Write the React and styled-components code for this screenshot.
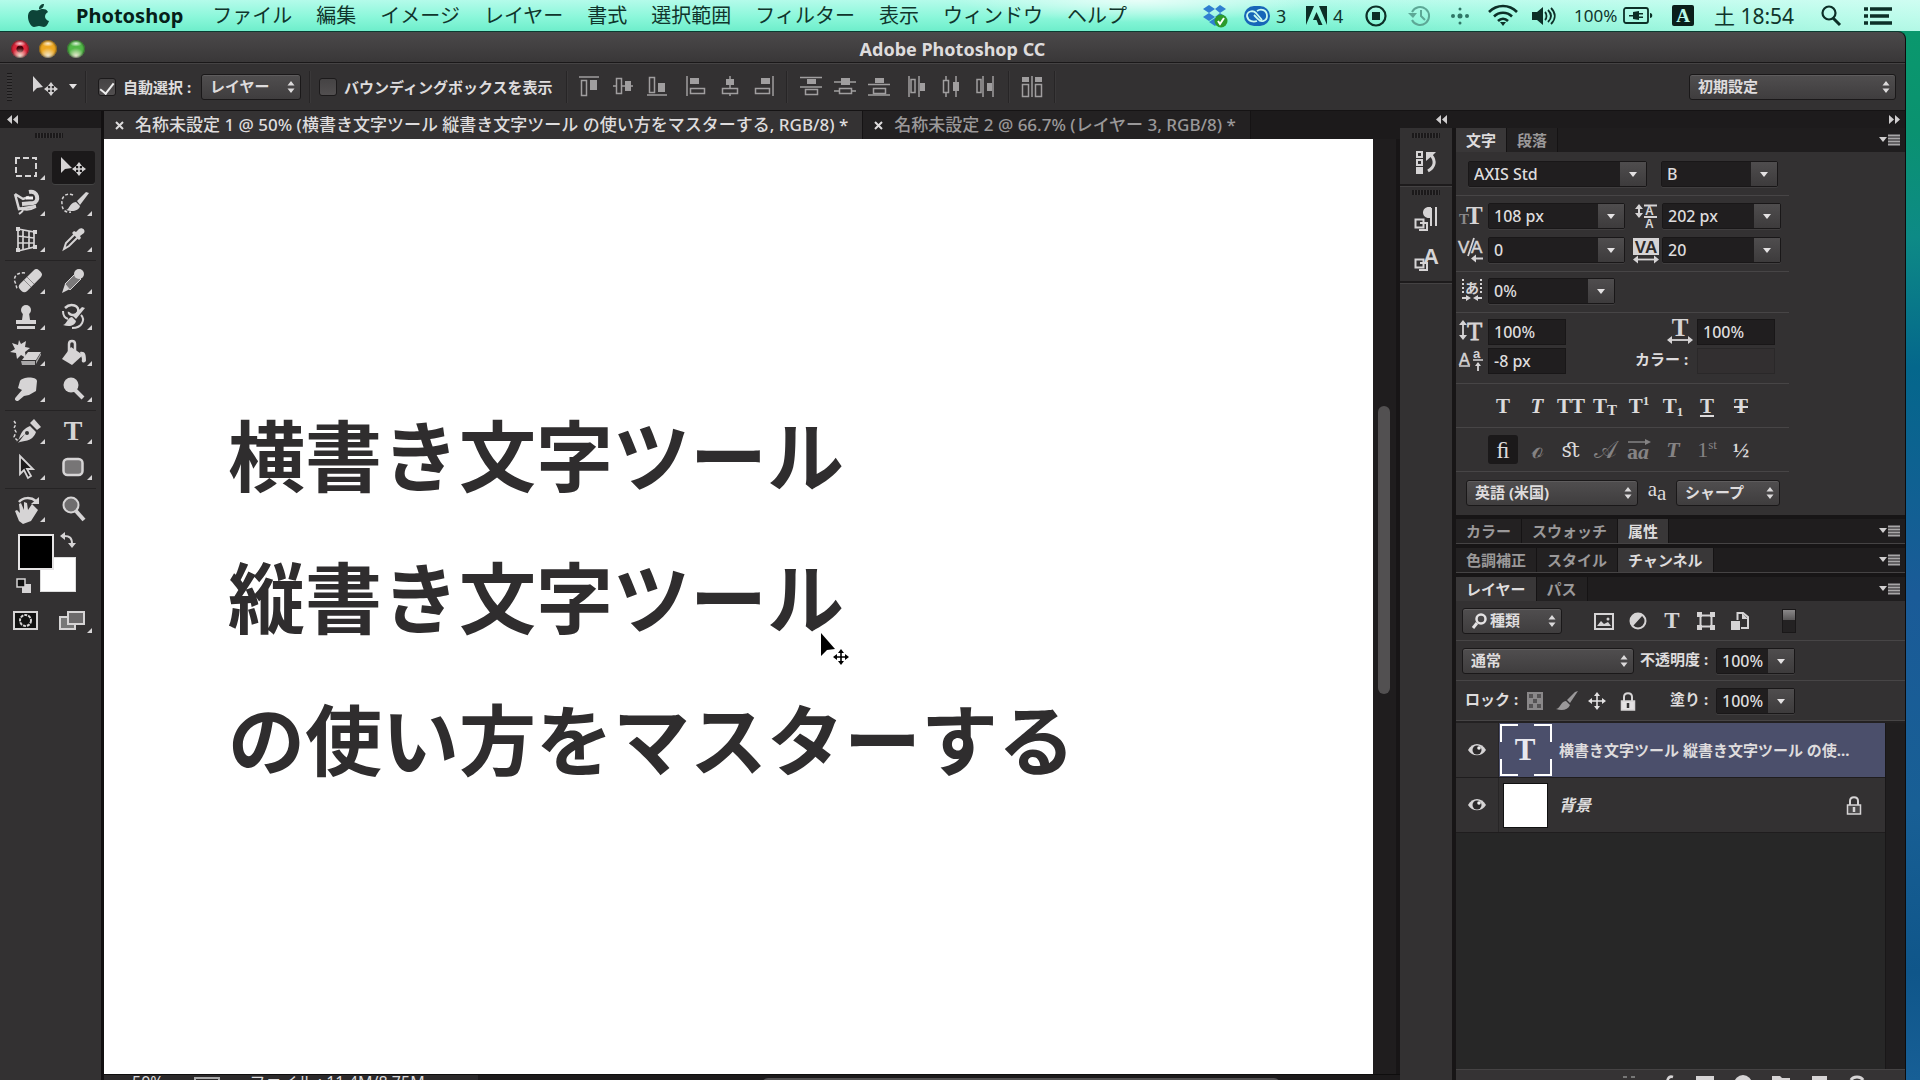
import React from "react";
import styled, { createGlobalStyle, css } from "styled-components";

const color = {
  panel: "#333132",
  strip: "#1f1d1e",
  edge: "#171516",
  field: "#201e1f",
  line: "#4a4849",
  text: "#dedcdd",
  dim: "#9a9899",
  icon: "#d6d4d5",
};

const Global = createGlobalStyle`
  * { box-sizing: border-box; }
  body {
    margin: 0;
    overflow: hidden;
    background: #0b5c8f;
    font-family: "Noto Sans", "Noto Sans CJK JP", sans-serif;
    font-size: 16px;
    line-height: 24px;
    color: ${color.text};
  }
  button, select, input {
    font: inherit;
    color: inherit;
    margin: 0;
    padding: 0;
    border: 0;
    background: none;
    outline: none;
  }
  ul { list-style: none; margin: 0; padding: 0; }
  svg { display: block; flex: none; overflow: visible; }
`;

const Desktop = styled.div`
  height: 100vh;
  display: flex;
  flex-direction: column;
  background: linear-gradient(#0a9a6c 0, #0a9270 12%, #0d8a86 22%, #04678c 34%, #1a5b98 55%, #185f95 75%, #0f568a 90%, #175f96 100%);
`;

/* ---------- menu bar ---------- */

const MenuBar = styled.header`
  flex: none;
  height: 31px;
  display: flex;
  align-items: center;
  padding: 0 26px 0 28px;
  color: #10352c;
  font-size: 20px;
  line-height: 30px;
  background:
    radial-gradient(ellipse 180px 22px at 1140px 0, rgba(255, 255, 255, 0.7), transparent),
    linear-gradient(90deg, transparent 65%, rgba(225, 255, 247, 0.6)),
    linear-gradient(#b4fbea, #8bf7da 55%, #6eeecb);
`;
const Menus = styled.nav`
  display: flex;
  gap: 24px;
  margin-left: 27px;
`;
const MenuItem = styled.button`
  white-space: nowrap;
  font-weight: ${(p) => (p.$strong ? 700 : 400)};
  color: ${(p) => (p.$strong ? "#062019" : "inherit")};
  padding-right: ${(p) => (p.$strong ? 5 : 0)}px;
`;
const Status = styled.div`
  display: flex;
  align-items: center;
  gap: 16px;
  margin-left: auto;
`;
const StatusItem = styled.button`
  width: ${(p) => p.$w}px;
  height: 30px;
  display: flex;
  align-items: center;
  gap: 6px;
  font-size: ${(p) => p.$size || 18}px;
  white-space: nowrap;
`;

/* ---------- window ---------- */

const Window = styled.main`
  flex: 1;
  min-height: 0;
  display: flex;
  flex-direction: column;
  margin-right: 14px;
  border-top: 1px solid #0a3b30;
  border-right: 1px solid #0d0c0d;
  border-radius: 0 8px 0 0;
  background: ${color.edge};
  overflow: hidden;
`;
const TitleBar = styled.div`
  flex: none;
  height: 31px;
  display: grid;
  grid-template-columns: 1fr auto 1fr;
  align-items: center;
  padding: 4px 11px 0;
  background: linear-gradient(#4b494a, #393738);
  border-bottom: 1px solid #1a1819;
`;
const Lights = styled.div`
  display: flex;
  gap: 10px;
`;
const Light = styled.button`
  width: 18px;
  height: 18px;
  border-radius: 50%;
  background:
    radial-gradient(ellipse 6px 3px at 50% 20%, rgba(255, 255, 255, 0.8), transparent),
    radial-gradient(circle at 50% 90%, #f4eedb, transparent 45%),
    ${(p) => p.$dot ? "radial-gradient(circle, #4a0008 0 3px, transparent 4px)," : ""}
    ${(p) => p.$c};
  box-shadow: inset 0 0 2px 1px rgba(0, 0, 0, 0.5);
`;
const Title = styled.h1`
  margin: 0;
  font-size: 18px;
  line-height: 24px;
  font-weight: 700;
`;

const OptionsBar = styled.div`
  flex: none;
  height: 48px;
  display: flex;
  align-items: center;
  padding: 0 9px 1px 0;
  background: ${color.panel};
  border-top: 1px solid #454344;
  border-bottom: 1px solid #151314;
`;
const OptGroup = styled.div`
  width: ${(p) => p.$w}px;
  height: 32px;
  padding-left: ${(p) => p.$pl}px;
  display: flex;
  align-items: center;
  gap: ${(p) => p.$gap || 0}px;
  border-right: 1px solid #272526;
  box-shadow: 1px 0 #3a3839;
  white-space: nowrap;
`;
const Grip = styled.div`
  background: ${(p) =>
    p.$v
      ? "repeating-linear-gradient(#1b191a 0 1px, #3a3839 1px 3px)"
      : "repeating-linear-gradient(90deg, #1b191a 0 2px, #3a3839 2px 3px)"};
  width: ${(p) => (p.$v ? 5 : 28)}px;
  height: ${(p) => (p.$v ? 28 : 5)}px;
`;
const CheckLabel = styled.label`
  display: flex;
  align-items: center;
  gap: 7px;
  font-weight: 700;
  font-size: 15px;
`;
const CheckBox = styled.input`
  appearance: none;
  width: 18px;
  height: 18px;
  border-radius: 3px;
  border: 1px solid #1c1a1b;
  background: linear-gradient(#454344, #524f50);
  display: grid;
  place-items: center;
  &:checked::before {
    content: "";
    width: 6px;
    height: 12px;
    border: solid #eee;
    border-width: 0 2px 2px 0;
    transform: rotate(38deg);
  }
`;
const AlignButton = styled.button`
  width: 34px;
  height: 26px;
  display: grid;
  place-items: center;
`;
const AlignSet = styled.div`
  display: flex;
`;
const PushSelect = styled.div`
  margin-left: auto;
  ${OptGroup} & { padding-right: 8px; }
`;

const SelectWrap = styled.div`
  display: grid;
  align-items: center;
  flex: none;
  width: ${(p) => p.$w}px;
  > * { grid-area: 1 / 1; }
  > svg { justify-self: end; margin-right: 6px; pointer-events: none; }
`;
const SelectBox = styled.select`
  appearance: none;
  width: 100%;
  height: 26px;
  padding: 0 18px 3px ${(p) => p.$pl || 8}px;
  font-weight: 700;
  font-size: 15px;
  line-height: 22px;
  border: 1px solid #1a1819;
  border-radius: 3px;
  background: linear-gradient(#504e4f, #3f3d3e);
  box-shadow: inset 0 1px #5e5c5d;
  option { color: #222; }
`;
const FilterGlyph = styled.span`
  padding-left: 10px;
  pointer-events: none;
`;

/* ---------- work area ---------- */

const Work = styled.div`
  flex: 1;
  min-height: 0;
  display: flex;
`;
const ToolColumn = styled.aside`
  flex: none;
  width: 104px;
  display: flex;
  flex-direction: column;
  background: ${color.panel};
  border-right: 3px solid #121011;
`;
const CollapseBar = styled.div`
  flex: none;
  height: 17px;
  display: flex;
  align-items: center;
  justify-content: space-between;
  padding: ${(p) => p.$p};
  background: #1d1b1c;
`;
const CollapseButton = styled.button`
  display: flex;
  height: 12px;
  align-items: center;
`;
const ToolGrip = styled.div`
  height: 23px;
  padding: 5px 0 0 35px;
`;
const ToolGroup = styled.div`
  display: grid;
  grid-template-columns: 43px 43px;
  gap: 3px 4px;
  margin: 0 5px;
  & + & {
    margin-top: 4px;
    padding-top: 4px;
    border-top: 1px solid #252324;
  }
`;
const ToolButton = styled.button`
  width: 43px;
  height: 33px;
  border-radius: 3px;
  ${(p) => p.$on && css`background: #1b191a; box-shadow: 0 1px #444;`}
`;
const Swatches = styled.div`
  display: grid;
  grid-template-columns: 2px 22px 14px 22px;
  grid-template-rows: 2px 23px 13px 22px 2px;
  margin: 6px 0 10px 16px;
`;
const Swatch = styled.button`
  grid-area: ${(p) => p.$area};
  background: ${(p) => p.$c};
  border: ${(p) => p.$b};
  z-index: ${(p) => p.$z};
`;
const SwatchAux = styled.button`
  grid-area: ${(p) => p.$area};
  align-self: ${(p) => p.$as};
  justify-self: ${(p) => p.$js};
  z-index: 2;
`;

const Doc = styled.section`
  flex: 1;
  min-width: 0;
  display: flex;
  flex-direction: column;
`;
const DocTabs = styled.div`
  flex: none;
  height: 28px;
  display: flex;
  background: #1c1a1b;
`;
const DocTab = styled.div`
  display: flex;
  align-items: center;
  gap: 11px;
  padding: 0 14px 0 10px;
  font-size: 17px;
  line-height: 24px;
  font-weight: 500;
  white-space: nowrap;
  color: ${(p) => (p.$on ? color.text : color.dim)};
  background: ${(p) => (p.$on ? "#343233" : "#232122")};
  border-right: 1px solid #151314;
`;
const TabName = styled.button`
  white-space: nowrap;
`;
const CloseTab = styled.button`
  width: 10px;
  display: grid;
  place-items: center;
  height: 20px;
  color: ${color.text};
`;
const CanvasRow = styled.div`
  flex: 1;
  min-height: 0;
  display: flex;
`;
const Canvas = styled.div`
  position: relative;
  flex: 1;
  padding: 243px 0 0 124px;
  background: #fff;
`;
const CanvasText = styled.p`
  margin: 0;
  color: #2f2d2e;
  font-family: "Noto Sans CJK JP", sans-serif;
  font-weight: 700;
  font-size: 77px;
  line-height: 142px;
  white-space: pre-line;
`;
const Cursor = styled.svg`
  position: absolute;
  left: 716px;
  top: 493px;
`;
const VTrack = styled.div`
  flex: none;
  width: 27px;
  display: grid;
  grid-template-rows: 267fr 287fr 380fr;
  padding-left: 5px;
  background: #1f1d1e;
  border-right: 4px solid ${color.edge};
`;
const VThumb = styled.div`
  grid-row: 2;
  width: 12px;
  border-radius: 6px;
  background: #525051;
`;
const StatusBar = styled.div`
  flex: none;
  height: 6px;
  display: flex;
  align-items: flex-start;
  background: #1c1a1b;
  border-top: 1px solid #0e0d0d;
  font-size: 16px;
  line-height: 14px;
  overflow: hidden;
`;
const StatusText = styled.div`
  width: 374px;
  display: flex;
  gap: 30px;
  padding: 0 0 0 28px;
  background: #2b292a;
  white-space: nowrap;
`;
const StatusIcon = styled.span`
  width: 26px;
  height: 14px;
  margin-top: 2px;
  border: 2px solid #aaa;
`;
const HTrack = styled.div`
  flex: 1;
  padding: 3px 120px 0 284px;
`;
const HThumb = styled.div`
  height: 12px;
  border-radius: 6px;
  background: #525051;
`;

/* ---------- dock ---------- */

const Dock = styled.aside`
  flex: none;
  width: 505px;
  display: flex;
  flex-direction: column;
`;
const DockBody = styled.div`
  flex: 1;
  min-height: 0;
  display: flex;
  gap: 4px;
`;
const IconRail = styled.div`
  width: 52px;
  background: ${color.panel};
`;
const RailGroup = styled.div`
  display: flex;
  flex-direction: column;
  align-items: center;
  padding: ${(p) => p.$p};
  border-bottom: 2px solid #1d1b1c;
  box-shadow: 0 1px #444243;
  ${Grip} { margin-bottom: 4px; }
`;
const RailButton = styled.button`
  width: 40px;
  height: 40px;
  display: grid;
  place-items: center;
`;
const Panels = styled.div`
  flex: 1;
  min-width: 0;
  display: flex;
  flex-direction: column;
  background: ${color.edge};
`;
const PanelTabs = styled.div`
  flex: none;
  height: 24px;
  display: flex;
  background: ${color.strip};
  ${(p) => p.$closed && css`height: 25px; border-bottom: 1px solid #454344;`}
  ${(p) => p.$gap && css`margin-top: 4px;`}
`;
const PanelTab = styled.button`
  padding: 0 10px 1px;
  font-weight: 700;
  font-size: 15px;
  line-height: 22px;
  white-space: nowrap;
  color: ${(p) => (p.$on ? color.text : color.dim)};
  background: ${(p) => (p.$on ? "#393738" : "#232122")};
  border-right: 1px solid #151314;
`;
const PanelMenu = styled.button`
  margin: 0 5px 0 auto;
  width: 21px;
  display: grid;
  place-items: center;
`;
const PanelBody = styled.div`
  flex: none;
  background: ${color.panel};
`;
const Section = styled.div`
  max-width: 333px;
  padding: ${(p) => p.$pt || 7}px 0 ${(p) => p.$pb || 8}px;
  border-bottom: 1px solid ${(p) => (p.$last ? "transparent" : "#474546")};
  display: grid;
  row-gap: ${(p) => p.$gap || 8}px;
`;
const FieldRow = styled.div`
  display: grid;
  grid-template-columns: ${(p) => p.$cols};
  align-items: center;
  height: 26px;
`;
const Combo = styled.div`
  display: flex;
  height: 26px;
  width: ${(p) => p.$w}px;
  border: 1px solid #191718;
  box-shadow: 0 1px #403e3f;
  border-radius: 2px;
`;
const Field = styled.input`
  flex: ${(p) => (p.$solo ? "none" : 1)};
  min-width: 0;
  width: ${(p) => (p.$solo ? 78 : 40)}px;
  height: ${(p) => (p.$solo ? 26 : 24)}px;
  padding-left: 5px;
  font-weight: 500;
  background: ${(p) => (p.$blank ? "#322f30" : color.field)};
  ${(p) => p.$solo && css`border: 1px solid ${p.$blank ? "#2a2829" : "#191718"};`}
`;
const Drop = styled.button`
  width: 26px;
  display: grid;
  place-items: center;
  background: linear-gradient(#4f4d4e, #3d3b3c);
`;
const FieldIcon = styled.label`
  display: block;
  padding-left: ${(p) => p.$pl || 3}px;
`;
const RowLabel = styled.label`
  font-weight: 700;
  font-size: 15px;
  white-space: nowrap;
  line-height: 22px;
  padding-bottom: 4px;
`;
const StyleRow = styled.div`
  height: 44px;
  max-width: 333px;
  display: flex;
  align-items: center;
  gap: 4px;
  padding-left: 32px;
  border-bottom: 1px solid #474546;
`;
const StyleButton = styled.button`
  width: 30px;
  height: 29px;
  display: flex;
  align-items: center;
  justify-content: center;
  font-family: "Liberation Serif", "DejaVu Serif", serif;
  font-size: ${(p) => p.$size || 21}px;
  line-height: 26px;
  white-space: nowrap;
  font-weight: ${(p) => (p.$light ? 400 : 700)};
  font-style: ${(p) => (p.$italic ? "italic" : "normal")};
  text-decoration: ${(p) => p.$deco || "none"};
  color: ${(p) => (p.$off ? "#858384" : "#dcdadb")};
  ${(p) => p.$on && css`background: #1b191a; border-radius: 3px;`}
  small { font-size: 15px; line-height: 20px; align-self: flex-end; }
  sup, sub { font-size: 13px; line-height: 10px; }
  sup { align-self: flex-start; margin-top: 5px; }
  sub { align-self: flex-end; margin-bottom: 3px; }
`;
const FieldHalf = styled.div`
  display: flex;
  width: 78px;
`;
const AntiAlias = styled.label`
  display: flex;
  justify-content: center;
  font-family: "Liberation Serif", serif;
  font-size: 21px;
  line-height: 20px;
  padding-bottom: 4px;
`;
const AntiAliasLow = styled.span`
  padding-top: 4px;
`;
const LayerBar = styled.div`
  height: 40px;
  padding: 7px 0 6px 6px;
  display: flex;
  align-items: center;
  border-bottom: 1px solid #474546;
`;
const LayerIcons = styled.div`
  display: flex;
  gap: ${(p) => p.$gap}px;
  margin-left: ${(p) => p.$ml}px;
  button { width: 20px; height: 24px; display: grid; place-items: center; }
`;
const FilterSwitch = styled.button`
  width: 14px;
  height: 24px;
  margin-left: 32px;
  border: 1px solid #1a1819;
  background: linear-gradient(#8a8889, #5a5859 45%, #242223 46%);
`;
const LayerLabel = styled(RowLabel)`
  width: ${(p) => p.$w}px;
  margin-left: ${(p) => p.$ml || 0}px;
`;
const LayerArea = styled.div`
  flex: 1;
  min-height: 0;
  display: flex;
  background: #272727;
  border-top: 2px solid #232122;
`;
const LayerList = styled.ul`
  flex: 1;
  min-width: 0;
`;
const LayerScroll = styled.div`
  width: 20px;
  background: #201e1f;
  border-left: 1px solid #191718;
`;
const LayerItem = styled.li`
  height: 55px;
  display: flex;
  align-items: center;
  border-bottom: 1px solid #1f1d1e;
  background: ${(p) => (p.$on ? "#4b4f6b" : "#333132")};
`;
const EyeButton = styled.button`
  flex: none;
  width: 43px;
  height: 54px;
  display: grid;
  place-items: center;
  background: #333132;
  border-right: 1px solid #272526;
`;
const Thumb = styled.div`
  flex: none;
  width: 53px;
  height: 54px;
  display: grid;
  place-items: center;
`;
const WhiteThumb = styled.div`
  width: 45px;
  height: 45px;
  background: #fff;
  border: 1px solid #111;
`;
const LayerName = styled.span`
  flex: 1;
  padding: 0 0 1px 7px;
  font-size: ${(p) => (p.$italic ? 16 : 15)}px;
  font-weight: 700;
  font-style: ${(p) => (p.$italic ? "italic" : "normal")};
  white-space: nowrap;
`;
const LayerLock = styled.span`
  margin-right: 23px;
`;
const LayerFooter = styled.div`
  flex: none;
  height: 11px;
  display: flex;
  justify-content: flex-end;
  gap: 18px;
  padding: 5px 38px 0 0;
  background: #353334;
  border-top: 1px solid #454344;
  overflow: hidden;
  button { width: 20px; height: 18px; flex: none; }
`;

/* ---------- drawings ---------- */

const Ico = ({ w, h, children, ...rest }) => (
  <svg width={w} height={h} viewBox={`0 0 ${w} ${h}`} fill="none" aria-hidden="true" {...rest}>
    {children}
  </svg>
);
const I = color.icon;

const UpDown = () => (
  <Ico w={8} h={14}><path d="M0.5 5.5 4 1l3.5 4.5zM0.5 8.5 4 13l3.5-4.5z" fill="#dcdadb" /></Ico>
);
const Down = () => <Ico w={8} h={5}><path d="M0 0h8L4 5z" fill="#e4e2e3" /></Ico>;
const Chev = ({ right }) => (
  <Ico w={12} h={9}>
    <path d={right ? "M1 0l5 4.5L1 9zM7 0l5 4.5L7 9z" : "M5 0v9L0 4.5zM11 0v9L6 4.5z"} fill="#cfcdce" />
  </Ico>
);
const FlyMenu = () => (
  <Ico w={21} h={13}>
    <path d="M0 3h8L4 8z" fill="#d0cecf" />
    <path d="M9 1.5h12M9 4.5h12M9 7.5h12M9 10.5h12" stroke="#a8a6a7" strokeWidth="2" />
  </Ico>
);
const Close = () => <Ico w={9} h={9}><path d="M1 1l7 7M8 1L1 8" stroke="currentColor" strokeWidth="2" /></Ico>;

const FourWay = ({ x, y, r = 6, fill = I }) => (
  <g fill={fill} stroke={fill}>
    <path d={`M${x - r + 1} ${y}H${x + r - 1}M${x} ${y - r + 1}V${y + r - 1}`} strokeWidth="1.6" />
    <path
      stroke="none"
      d={`M${x} ${y - r - 1}l3 4h-6zM${x} ${y + r + 1}l3-4h-6zM${x - r - 1} ${y}l4-3v6zM${x + r + 1} ${y}l-4-3v6z`}
    />
  </g>
);
const MoveIcon = () => (
  <Ico w={27} h={22}>
    <path d="M1 0v16l4-4 6-1z" fill={I} />
    <FourWay x={19} y={13} />
  </Ico>
);

const alignPaths = {
  top: <><path d="M0 1h20" /><path d="M2.5 4.5h5v15h-5z" /><path d="M11 4h7v10h-7z" fill="#a09e9f" stroke="none" /></>,
  vmid: <><path d="M0 10h20" /><path d="M3.5 2.5h5v15h-5z" fill="#333132" /><path d="M12 5h6v10h-6z" fill="#a09e9f" stroke="none" /></>,
  bottom: <><path d="M0 19h20" /><path d="M2.5 1.5h5v15h-5z" /><path d="M11 7h7v9h-7z" fill="#a09e9f" stroke="none" /></>,
  left: <><path d="M1 0v20" /><path d="M4 2h9v6h-9z" fill="#a09e9f" stroke="none" /><path d="M4.5 12.5h14v5h-14z" /></>,
  hmid: <><path d="M10 0v20" /><path d="M6 3h8v6H6z" fill="#a09e9f" stroke="none" /><path d="M2.5 12.5h15v5h-15z" fill="#333132" /></>,
  right: <><path d="M19 0v20" /><path d="M7 2h9v6H7z" fill="#a09e9f" stroke="none" /><path d="M1.5 12.5h14v5h-14z" /></>,
  dtop: <><path d="M0 1.5h22M0 11h22" /><path d="M7 3h9v5H7z" fill="#a09e9f" stroke="none" /><path d="M5.5 13.5h12v5h-12z" /></>,
  dmid: <><path d="M0 6h22M0 15h22" /><path d="M7 2h9v7H7z" fill="#a09e9f" stroke="none" /><path d="M5.5 12.5h12v5h-12z" fill="#333132" /></>,
  dbottom: <><path d="M0 8.5h22M0 19h22" /><path d="M7 2h9v5H7z" fill="#a09e9f" stroke="none" /><path d="M5.5 12.5h12v5h-12z" /></>,
  dleft: <><path d="M2 0v21M12 0v21" /><path d="M4 3.5h4v13H4z" /><path d="M13 7h5v8h-5z" fill="#a09e9f" stroke="none" /></>,
  dcenter: <><path d="M5 0v21M15 0v21" /><path d="M2.5 4.5h5v12h-5z" fill="#333132" /><path d="M12 6h6v9h-6z" fill="#a09e9f" stroke="none" /></>,
  dright: <><path d="M8 0v21M18 0v21" /><path d="M2 3.5h4v13H2z" /><path d="M12 7h5v8h-5z" fill="#a09e9f" stroke="none" /></>,
  auto: <><path d="M11 0v21M1.5 8.5h6v12h-6zM14.5 8.5h6v12h-6z" /><path d="M1 1h7v5H1zM14 1h7v5h-7z" fill="#a09e9f" stroke="none" /></>,
};
const AlignIcon = ({ k }) => (
  <Ico w={22} h={21}><g stroke="#a09e9f" strokeWidth="1.5">{alignPaths[k]}</g></Ico>
);

const brush = (
  <>
    <path d="M37 6l-3-1-9 9 3 4z" fill={I} />
    <path d="M24 15l4 4c-1 5-8 6-14 4 4-1 3-7 10-8z" fill={I} />
  </>
);
const toolDrawings = {
  marquee: <path d="M11 7h20v18H11z" stroke={I} strokeWidth="2" strokeDasharray="6 3" strokeDashoffset="2" />,
  move: <><path d="M9 6v16l4-4 7-1z" fill={I} /><FourWay x={27} y={18} /></>,
  lasso: <><path d="M24 5c9-2 11 10 4 11l-11 1" stroke={I} strokeWidth="4" /><path d="M10 7l4 15 17-3M10 7l8 5 6-2" stroke={I} strokeWidth="2.5" /><path d="M31 20c-5 3-12 3-17 1M17 20c2 4 0 5-3 7" stroke={I} strokeWidth="2" /><path d="M21 11h7" stroke="#f2f0f1" strokeWidth="3" /></>,
  quick: <><path d="M21 8c-7-3-12 2-11 9 0 6 4 9 9 8" stroke={I} strokeWidth="1.5" strokeDasharray="3 2" />{brush}</>,
  crop: <><path d="M13 6l16 3v15l-16 4zM18 7v20M24 8v17M13 13l16 2M13 20h16" stroke={I} strokeWidth="1.7" /><path d="M11 4h4v4h-4zM28 7h4v4h-4zM28 22h4v4h-4zM11 25h4v4h-4z" fill={I} /></>,
  dropper: <><path d="M12 26l2-6 9-9 3 3-9 9z" stroke={I} strokeWidth="2" /><path d="M20 10l7 7 2-2-1-2 4-3c2-3-2-6-5-4l-3 3-2-1z" fill={I} /></>,
  heal: <><path d="M20 8c-8-1-12 4-10 9s1 6 3 7" stroke={I} strokeWidth="1.5" strokeDasharray="3 2" /><rect x="-13" y="-5" width="27" height="10" rx="4" fill={I} transform="translate(25 16) rotate(-45)" /><path d="M19 15l7 7M22 12l7 7" stroke="#8a8889" strokeWidth="1" /></>,
  pencil: <><path d="M10 28l3-9 5 5z" fill={I} /><path d="M13 19l10-10 6 5-11 11z" fill="#7b797a" stroke={I} strokeWidth="1" /><circle cx="27" cy="9" r="5" fill={I} /></>,
  stamp: <><circle cx="21" cy="9" r="5" fill={I} /><path d="M18 12h6l1 7h6v4H11v-4h6zM12 25h18v3H12z" fill={I} /></>,
  history: <><path d="M13 7c6-6 15-2 13 4-2 5-10 3-9 0" stroke={I} strokeWidth="2.5" /><path d="M11 10c0 5 2 7 5 8M20 27c11 0 13-9 9-13" stroke={I} strokeWidth="2" /><path d="M33 7l-3-1-9 9 3 3z" fill={I} /><path d="M20 16l4 4c-1 5-7 6-13 4 4-1 4-7 9-8z" fill={I} /></>,
  eraser: <><path d="M14 3l2 4 5-3-1 6 5 1-5 4 1 6-5-3-4 4-1-6-6-1 5-3-3-6 6 2z" fill={I} /><path d="M17 23l6-8h13l-5 8z" fill={I} /><path d="M16 24h14v4H17zM31 27l5-9v-2l-5 8z" fill="#a9a7a8" /></>,
  bucket: <><path d="M10 22l9-12 12 8-11 10z" fill={I} /><path d="M17 15V7c0-4 6-4 6 0v8" stroke={I} strokeWidth="2.5" /><path d="M28 15c5-1 6 2 6 9-3 3-5 1-4-2z" fill={I} /></>,
  smudge: <path d="M15 8c2-4 16-5 17 0l-1 10-7 4-5 1-6 5c-3 0-4-2-2-4l6-7-4-2z" fill={I} />,
  dodge: <><circle cx="19" cy="12" r="7.500" fill={I} /><path d="M23 17l8 8" stroke={I} strokeWidth="4" /></>,
  pen: <><path d="M9 6l2 3-2 4 2 4-2 5 4 4" stroke={I} strokeWidth="1.5" strokeDasharray="3 2" /><path d="M11 27c5-2 2-11 14-16l6 6c-4 11-13 8-18 11l7-9z" fill={I} /><path d="M25 8l4-4 7 8-4 3z" fill={I} /><circle cx="22" cy="18" r="2" fill="#333" /></>,
  select: <path d="M15 5v18l4-4 4 8 3-2-4-7h6z" stroke={I} strokeWidth="1.8" fill="#1d1b1c" />,
  shape: <rect x="11.5" y="8" width="19" height="16" rx="4" fill="#777576" stroke={I} strokeWidth="2.5" />,
  rotate: <><path d="M14 9c4-5 12-5 17-1" stroke={I} strokeWidth="2.5" /><path d="M34 4v7h-8z" fill={I} /><path d="M10 18l2-1 3 3-1-9 2-1 3 7v-8l3 1 1 7 4-6 6 6-7 11-8 3-4-3z" fill={I} /></>,
  zoom: <><circle cx="19" cy="12" r="7.500" fill="#6f6d6e" stroke={I} strokeWidth="2" /><path d="M24 18l8 9" stroke={I} strokeWidth="4" /></>,
};
const TypeGlyph = styled.text`
  font-family: "Liberation Serif", serif;
  font-weight: 700;
`;
const Tool = ({ k, label, plain }) => (
  <ToolButton aria-label={label} $on={k === "move"}>
    <Ico w={43} h={33}>
      {k === "type"
        ? <TypeGlyph x="21" y="25" fontSize="28" textAnchor="middle" fill={I}>T</TypeGlyph>
        : toolDrawings[k]}
      {!plain && <path d="M40 24v5h-5z" fill={I} />}
    </Ico>
  </ToolButton>
);

const Eye = () => (
  <Ico w={18} h={14}>
    <path d="M0 7c4-8 14-8 18 0-4 7-14 7-18 0z" fill="#d6d4d5" />
    <circle cx="9" cy="7" r="4.500" fill="#2b292a" /><circle cx="11" cy="5" r="1.800" fill="#eee" />
  </Ico>
);
const Lock = ({ hollow }) => (
  <Ico w={16} h={19}>
    <path d="M4 9V5c0-5 8-5 8 0v4" stroke={I} strokeWidth="2" />
    <path d="M1.500 9h13v9h-13z" fill={hollow ? "#4a4849" : "#e4e2e3"} stroke={I} strokeWidth="1.500" />
    <path d="M8 11v5" stroke={hollow ? I : "#333132"} strokeWidth="2.500" />
  </Ico>
);

const S = "Liberation Serif, serif";
const SA = "Liberation Sans, sans-serif";
const fieldIcons = {
  size: <><text x="0" y="20" fontFamily={S} fontSize="15" fontWeight="700" fill="#8b898a">T</text><text x="7" y="20" fontFamily={S} fontSize="25" fontWeight="700" fill={I}>T</text></>,
  leading: <><path d="M11 1.500h13M11 13h13" stroke={I} strokeWidth="2" /><text x="12" y="11" fontFamily={SA} fontSize="12" fontWeight="700" fill={I}>A</text><text x="12" y="24" fontFamily={SA} fontSize="12" fontWeight="700" fill={I}>A</text><path d="M6 4v7" stroke={I} strokeWidth="2" /><path d="M2 5l4-5 4 5zM2 9l4 5 4-5z" fill={I} /></>,
  kern: <><text x="-1" y="15" fontFamily={SA} fontSize="17" fill={I} stroke={I} strokeWidth="0.500">V</text><text x="12" y="15" fontFamily={SA} fontSize="17" fill={I} stroke={I} strokeWidth="0.500">A</text><path d="M9 18L15 0M15 20.500h9" stroke={I} strokeWidth="1.800" /><path d="M12 20.500l5-4v8z" fill={I} /></>,
  track: <><path d="M0 0h26v17H0z" fill={I} /><text x="13" y="15" textAnchor="middle" fontFamily={SA} fontSize="17" fontWeight="700" fill="#2b292a">VA</text><path d="M3 21.500h20" stroke={I} strokeWidth="1.800" /><path d="M0 21.500l5-4v8zM26 21.500l-5-4v8z" fill={I} /></>,
  tsume: <><path d="M2 0v16M20 0v16" stroke={I} strokeWidth="2" strokeDasharray="2 2" /><text x="11" y="14" textAnchor="middle" fontFamily="Noto Sans CJK JP" fontSize="14" fontWeight="700" fill={I}>あ</text><path d="M1 19h5M16 19h5" stroke={I} strokeWidth="2" /><path d="M10 19l-5-3v6zM12 19l5-3v6z" fill={I} /></>,
  vscale: <><path d="M4 4v13" stroke={I} strokeWidth="1.800" /><path d="M0 5l4-5 4 5zM0 15l4 5 4-5z" fill={I} /><text x="8" y="20" fontFamily={S} fontSize="25" fill={I} stroke={I} strokeWidth="0.800">T</text></>,
  hscale: <><text x="13" y="16" textAnchor="middle" fontFamily={S} fontSize="25" fontWeight="700" fill={I}>T</text><path d="M3 20h20" stroke={I} strokeWidth="1.800" /><path d="M0 20l5-4v8zM26 20l-5-4v8z" fill={I} /></>,
  base: <><text x="0" y="16" fontFamily={SA} fontSize="16" fill={I} stroke={I} strokeWidth="0.500">A</text><path d="M0 17h11M14 11h10" stroke={I} strokeWidth="1.600" /><text x="14" y="9" fontFamily={SA} fontSize="13" fontWeight="700" fill={I}>a</text><path d="M19 14v8" stroke={I} strokeWidth="1.800" /><path d="M16 17l3-4 3 4z" fill={I} /></>,
};
const FIcon = ({ k, id, pl }) => (
  <FieldIcon htmlFor={id} $pl={pl} aria-label={id}>
    <Ico w={26} h={25}>{fieldIcons[k]}</Ico>
  </FieldIcon>
);

function Select({ id, label, w, pl, value, filter }) {
  return (
    <SelectWrap $w={w}>
      <SelectBox id={id} aria-label={label} $pl={pl} defaultValue={value}>
        <option>{value}</option>
      </SelectBox>
      {filter && (
        <FilterGlyph>
          <Ico w={15} h={16}><circle cx="9" cy="6" r="4.500" stroke="#e4e2e3" strokeWidth="2.500" /><path d="M5 10l-4 5" stroke="#e4e2e3" strokeWidth="3" /></Ico>
        </FilterGlyph>
      )}
      <UpDown />
    </SelectWrap>
  );
}
function ComboBox({ id, w, value }) {
  return (
    <Combo $w={w}>
      <Field id={id} aria-label={id} defaultValue={value} />
      <Drop aria-label={id}><Down /></Drop>
    </Combo>
  );
}
function TabRow({ tabs, active, closed, gap }) {
  return (
    <PanelTabs role="tablist" $closed={closed} $gap={gap}>
      {tabs.map((t) => (
        <PanelTab key={t} role="tab" aria-selected={t === active} $on={t === active}>{t}</PanelTab>
      ))}
      <PanelMenu aria-label="menu"><FlyMenu /></PanelMenu>
    </PanelTabs>
  );
}

function TopMenu() {
  const D = "#0c2f27";
  return (
    <MenuBar>
      <Ico w={21} h={24}>
        <path d="M11 6c2-1 7-2 9 2-5 3-3 8 1 9-1 3-3 6-5 6s-3-1-5-1-3 1-5 1C1 23-4 7 5 6c2 0 4 1 6 0zM11 5c0-3 2-5 5-5 0 3-2 5-5 5z" fill="#0d4438" />
      </Ico>
      <Menus>
        <MenuItem $strong>Photoshop</MenuItem>
        {["ファイル", "編集", "イメージ", "レイヤー", "書式", "選択範囲", "フィルター", "表示", "ウィンドウ", "ヘルプ"].map((m) => (
          <MenuItem key={m}>{m}</MenuItem>
        ))}
      </Menus>
      <Status>
        <StatusItem $w={26} aria-label="Dropbox">
          <Ico w={26} h={24}>
            <path d="M7 1l6 4-6 4-6-4zM18 1l6 4-6 4-5-4zM7 9l6 4-6 4-6-4zM18 9l6 4-6 4-5-4zM7 18l6-4 5 4-5 4z" fill="#2f7fd0" />
            <circle cx="19" cy="17" r="6.500" fill="#2c9a2c" /><path d="M16 17l2 3 4-6" stroke="#fff" strokeWidth="2" />
          </Ico>
        </StatusItem>
        <StatusItem $w={46} aria-label="Creative Cloud">
          <Ico w={26} h={20}>
            <rect width="26" height="20" rx="10" fill="#1766b8" />
            <path d="M13 15c-3 1-9 1-10-5 0-5 6-6 9-3l6 7M13 5c4-3 10-1 10 5 0 5-6 7-9 3l-4-4" stroke="#c9fbef" strokeWidth="1.800" />
          </Ico>3
        </StatusItem>
        <StatusItem $w={42} aria-label="Adobe">
          <Ico w={21} h={19}><path d="M0 0h8L0 19zM13 0h8v19zM10.500 6l6 13h-4l-2-5H7z" fill={D} /></Ico>4
        </StatusItem>
        <StatusItem $w={28} aria-label="record">
          <Ico w={24} h={22}><circle cx="12" cy="11" r="9.500" stroke={D} strokeWidth="2.200" /><path d="M8 7h8v8H8z" fill={D} /></Ico>
        </StatusItem>
        <StatusItem $w={26} aria-label="Time Machine">
          <Ico w={24} h={22}><path d="M4 7a9 9 0 1 1 0 8M13 5v6l4 4" stroke="#5da896" strokeWidth="2" /><path d="M0 8l5 5 4-5z" fill="#5da896" /></Ico>
        </StatusItem>
        <StatusItem $w={22} aria-label="keyboard">
          <Ico w={20} h={20}><g fill="#2f7565"><circle cx="10" cy="10" r="2.500" /><circle cx="3" cy="10" r="2" /><circle cx="17" cy="10" r="2" /><circle cx="10" cy="3" r="1.500" /><circle cx="10" cy="17" r="1.500" /></g></Ico>
        </StatusItem>
        <StatusItem $w={28} aria-label="Wi-Fi">
          <Ico w={30} h={21}><path d="M1 7c8-8 20-8 28 0M6 11.500c5-5 13-5 18 0M10 16c3-3 7-3 10 0" stroke={D} strokeWidth="2.600" /><path d="M15 21l-3-4h6z" fill={D} /></Ico>
        </StatusItem>
        <StatusItem $w={26} aria-label="volume">
          <Ico w={25} h={20}><path d="M0 6h5l6-5v18l-6-5H0z" fill={D} /><path d="M13 6c2 2 2 6 0 8M16 4c4 4 4 8 0 12M19 2c5 5 5 11 0 16" stroke={D} strokeWidth="1.800" /></Ico>
        </StatusItem>
        <StatusItem $w={82} $size={17}>
          100%
          <Ico w={30} h={17}><rect x="1" y="1" width="24" height="15" rx="2" stroke={D} strokeWidth="1.800" /><path d="M27 6c3 0 3 5 0 5zM6 8h4v-3l6-1v2h4v1.500h-4v2h4V11h-4v2l-6-1V9.500H6z" fill={D} /></Ico>
        </StatusItem>
        <StatusItem $w={26} aria-label="input source">
          <Ico w={22} h={21}><rect width="22" height="21" rx="2" fill="#0a1f1a" /><TypeGlyph x="11" y="17" fontSize="19" textAnchor="middle" fill="#b9fbea">A</TypeGlyph></Ico>
        </StatusItem>
        <StatusItem $w={90} $size={21}>土 18:54</StatusItem>
        <StatusItem $w={26} aria-label="search">
          <Ico w={22} h={21}><circle cx="9" cy="8" r="6.500" stroke={D} strokeWidth="2.200" /><path d="M13 13l7 7" stroke={D} strokeWidth="3" /></Ico>
        </StatusItem>
        <StatusItem $w={32} aria-label="notifications">
          <Ico w={32} h={18}><path d="M2 2h4M8 2h22M2 9h4M8 9h19M2 16h4M8 16h22" stroke={D} strokeWidth="3.500" /></Ico>
        </StatusItem>
      </Status>
    </MenuBar>
  );
}

function Options() {
  const set = (keys) => (
    <AlignSet>{keys.map((k) => <AlignButton key={k} aria-label={k}><AlignIcon k={k} /></AlignButton>)}</AlignSet>
  );
  return (
    <OptionsBar>
      <OptGroup $w={86} $pl={7}>
        <Grip $v />
        <BrushPreset aria-label="tool preset">
          <MoveIcon />
          <Down />
        </BrushPreset>
      </OptGroup>
      <OptGroup $w={224} $pl={12} $gap={7}>
        <CheckLabel><CheckBox type="checkbox" defaultChecked />自動選択 :</CheckLabel>
        <PushSelect><Select label="自動選択" w={100} value="レイヤー" /></PushSelect>
      </OptGroup>
      <OptGroup $w={257} $pl={9}>
        <CheckLabel><CheckBox type="checkbox" />バウンディングボックスを表示</CheckLabel>
      </OptGroup>
      <OptGroup $w={220} $pl={6} $gap={5}>{set(["top", "vmid", "bottom"])}{set(["left", "hmid", "right"])}</OptGroup>
      <OptGroup $w={222} $pl={7} $gap={5}>{set(["dtop", "dmid", "dbottom"])}{set(["dleft", "dcenter", "dright"])}</OptGroup>
      <OptGroup $w={46} $pl={6}>{set(["auto"])}</OptGroup>
      <PushSelect><Select label="ワークスペース" w={207} value="初期設定" /></PushSelect>
    </OptionsBar>
  );
}
const BrushPreset = styled.button`
  display: flex;
  align-items: center;
  gap: 10px;
  margin-left: 20px;
`;

function Toolbox() {
  return (
    <ToolColumn>
      <CollapseBar $p="0 7px"><CollapseButton aria-label="collapse"><Chev /></CollapseButton></CollapseBar>
      <ToolGrip><Grip /></ToolGrip>
      <ToolGroup>
        <Tool k="marquee" label="marquee" /><Tool k="move" label="move" plain />
        <Tool k="lasso" label="lasso" /><Tool k="quick" label="quick selection" />
        <Tool k="crop" label="crop" /><Tool k="dropper" label="eyedropper" />
      </ToolGroup>
      <ToolGroup>
        <Tool k="heal" label="healing" /><Tool k="pencil" label="pencil" />
        <Tool k="stamp" label="stamp" /><Tool k="history" label="history brush" />
        <Tool k="eraser" label="eraser" /><Tool k="bucket" label="bucket" />
        <Tool k="smudge" label="smudge" /><Tool k="dodge" label="dodge" />
      </ToolGroup>
      <ToolGroup>
        <Tool k="pen" label="pen" /><Tool k="type" label="type" />
        <Tool k="select" label="path selection" /><Tool k="shape" label="shape" />
      </ToolGroup>
      <ToolGroup>
        <Tool k="rotate" label="rotate view" /><Tool k="zoom" label="zoom" plain />
      </ToolGroup>
      <Swatches>
        <Swatch aria-label="foreground" $area="2 / 2 / 4 / 4" $c="#000" $b="2px solid #e6e4e5" $z={1} />
        <Swatch aria-label="background" $area="3 / 3 / 5 / 5" $c="#fff" $b="1px solid #ddd" $z={0} />
        <SwatchAux aria-label="swap" $area="1 / 4 / 3 / 5" $as="start" $js="end">
          <Ico w={16} h={16}><path d="M4 4c6 0 8 2 8 8" stroke={I} strokeWidth="2" /><path d="M0 4l5-4v8zM12 16l-4-5h8z" fill={I} /></Ico>
        </SwatchAux>
        <SwatchAux aria-label="default" $area="4 / 1 / 6 / 3" $as="end" $js="start">
          <Ico w={16} h={16}><path d="M6 6h9v9H6z" fill={I} /><path d="M1 1h8v8H1z" fill="#111" stroke={I} strokeWidth="1.500" /></Ico>
        </SwatchAux>
      </Swatches>
      <ToolGroup>
        <ToolButton aria-label="quick mask">
          <Ico w={43} h={33}><path d="M9 8h23v17H9z" fill="#111" stroke={I} strokeWidth="2" /><circle cx="20.500" cy="16.500" r="5.500" stroke={I} strokeWidth="2" strokeDasharray="3 1" /></Ico>
        </ToolButton>
        <ToolButton aria-label="screen mode">
          <Ico w={43} h={33}><path d="M8 13h15v12H8z" fill="#777" stroke={I} strokeWidth="2" /><path d="M16 8h16v12H16z" fill="#6c6a6b" stroke={I} strokeWidth="2" /><path d="M40 24v5h-5z" fill={I} /></Ico>
        </ToolButton>
      </ToolGroup>
    </ToolColumn>
  );
}

function DocumentArea() {
  return (
    <Doc>
      <DocTabs>
        <DocTab $on>
          <CloseTab aria-label="close"><Close /></CloseTab>
          <TabName>名称未設定 1 @ 50% (横書き文字ツール 縦書き文字ツール の使い方をマスターする, RGB/8) *</TabName>
        </DocTab>
        <DocTab>
          <CloseTab aria-label="close"><Close /></CloseTab>
          <TabName>名称未設定 2 @ 66.7% (レイヤー 3, RGB/8) *</TabName>
        </DocTab>
      </DocTabs>
      <CanvasRow>
        <Canvas>
          <CanvasText>{"横書き文字ツール\n縦書き文字ツール\nの使い方をマスターする"}</CanvasText>
          <Cursor width="32" height="36" viewBox="0 0 32 36">
            <path d="M1 1v23l6-6 8-1z" fill="#000" />
            <FourWay x={21} y={25} r={7} fill="#000" />
          </Cursor>
        </Canvas>
        <VTrack><VThumb /></VTrack>
      </CanvasRow>
      <StatusBar>
        <StatusText><span>50%</span><StatusIcon /><span>ファイル : 11.4M/8.75M</span></StatusText>
        <HTrack><HThumb /></HTrack>
      </StatusBar>
    </Doc>
  );
}

function Rail() {
  return (
    <IconRail>
      <RailGroup $p="5px 0 2px">
        <Grip />
        <RailButton aria-label="history">
          <Ico w={22} h={25}><path d="M2 2h5v5H2zM2 10h5v5H2z" stroke={I} strokeWidth="2" /><path d="M1 17h7v7H1z" fill={I} /><path d="M16 5c5 6 4 12-3 16" stroke={I} strokeWidth="3" /><path d="M11 2h10l-3 3-7 6z" fill={I} /></Ico>
        </RailButton>
      </RailGroup>
      <RailGroup $p="4px 0 2px">
        <Grip />
        <RailButton aria-label="paragraph styles">
          <Ico w={24} h={26}><path d="M17 2v18M22 1v19" stroke={I} strokeWidth="2" /><path d="M23 1H15c-8 0-8 11 0 11h2V1z" fill={I} /><path d="M1.500 13.500h8v8h-8zM6 17h7v7H5" stroke={I} strokeWidth="2" /></Ico>
        </RailButton>
        <RailButton aria-label="character styles">
          <Ico w={24} h={26}><text x="9" y="18" fontFamily={SA} fontSize="22" fontWeight="700" fill={I}>A</text><path d="M1.500 13.500h8v8h-8zM6 17h7v7H5" stroke={I} strokeWidth="2" /></Ico>
        </RailButton>
      </RailGroup>
    </IconRail>
  );
}

function CharacterPanel() {
  return (
    <PanelBody>
      <Section $pt={9}>
        <FieldRow $cols="12px 193px 1fr">
          <span />
          <ComboBox id="フォント" w={179} value="AXIS Std" />
          <ComboBox id="スタイル" w={117} value="B" />
        </FieldRow>
      </Section>
      <Section>
        <FieldRow $cols="32px 144px 30px 1fr">
          <FIcon k="size" id="サイズ" /><ComboBox id="サイズ" w={137} value="108 px" />
          <FIcon k="leading" id="行送り" pl={1} /><ComboBox id="行送り" w={119} value="202 px" />
        </FieldRow>
        <FieldRow $cols="32px 144px 30px 1fr">
          <FIcon k="kern" id="カーニング" /><ComboBox id="カーニング" w={137} value="0" />
          <FIcon k="track" id="トラッキング" pl={1} /><ComboBox id="トラッキング" w={119} value="20" />
        </FieldRow>
      </Section>
      <Section $pt={6}>
        <FieldRow $cols="32px 1fr">
          <FIcon k="tsume" id="ツメ" pl={5} /><ComboBox id="ツメ" w={127} value="0%" />
        </FieldRow>
      </Section>
      <Section $gap={3} $pt={6} $pb={9}>
        <FieldRow $cols="32px 178px 31px 78px">
          <FIcon k="vscale" id="垂直比率" />
          <FieldHalf><Field $solo id="垂直比率" defaultValue="100%" /></FieldHalf>
          <FIcon k="hscale" id="水平比率" pl={1} />
          <Field $solo id="水平比率" defaultValue="100%" />
        </FieldRow>
        <FieldRow $cols="32px 147px 62px 78px">
          <FIcon k="base" id="ベースライン" />
          <FieldHalf><Field $solo id="ベースライン" defaultValue="-8 px" /></FieldHalf>
          <RowLabel htmlFor="color">カラー :</RowLabel>
          <Field $solo $blank id="color" />
        </FieldRow>
      </Section>
      <StyleRow>
        <StyleButton>T</StyleButton>
        <StyleButton $italic>T</StyleButton>
        <StyleButton>TT</StyleButton>
        <StyleButton>T<small>T</small></StyleButton>
        <StyleButton>T<sup>1</sup></StyleButton>
        <StyleButton>T<sub>1</sub></StyleButton>
        <StyleButton $deco="underline">T</StyleButton>
        <StyleButton $deco="line-through">T</StyleButton>
      </StyleRow>
      <StyleRow>
        <StyleButton $on $light $size={24}>ﬁ</StyleButton>
        <StyleButton $off $light $size={26}>ℴ</StyleButton>
        <StyleButton $light $size={20}>ﬆ</StyleButton>
        <StyleButton $off $light $size={24}>𝒜</StyleButton>
        <StyleButton $off aria-label="aa">
          <Ico w={24} h={22}><path d="M1 3h20" stroke="#858384" strokeWidth="1.500" /><path d="M18 0l6 3-6 3z" fill="#858384" /><text x="0" y="20" fontFamily={S} fontSize="22" fill="#858384">a<tspan fontStyle="italic">a</tspan></text></Ico>
        </StyleButton>
        <StyleButton $off $italic $size={22}>T</StyleButton>
        <StyleButton $off $light $size={22}>1<sup>st</sup></StyleButton>
        <StyleButton $size={22}>½</StyleButton>
      </StyleRow>
      <Section $last $pb={9}>
        <FieldRow $cols="10px 172px 38px 1fr">
          <span />
          <Select label="言語" w={172} value="英語 (米国)" />
          <AntiAlias htmlFor="aa">a<AntiAliasLow>a</AntiAliasLow></AntiAlias>
          <Select id="aa" w={104} value="シャープ" />
        </FieldRow>
      </Section>
    </PanelBody>
  );
}

function LayersPanel() {
  return (
    <>
      <PanelBody>
        <LayerBar>
          <Select label="種類" w={100} pl={27} value="種類" filter />
          <LayerIcons $ml={32} $gap={14}>
            <button aria-label="pixel"><Ico w={20} h={17}><path d="M1 1h18v15H1z" stroke={I} strokeWidth="2" /><path d="M3 13l4-5 3 3 4-2 3 4z" fill={I} /><circle cx="14" cy="6" r="1.500" fill={I} /></Ico></button>
            <button aria-label="adjustment"><Ico w={18} h={18}><circle cx="9" cy="9" r="7.500" stroke={I} strokeWidth="2" /><path d="M14 3C10-1 1 2 2 9c0 3 1 4 2 5z" fill={I} /></Ico></button>
            <button aria-label="type"><Ico w={18} h={18}><TypeGlyph x="9" y="16" fontSize="23" textAnchor="middle" fill={I}>T</TypeGlyph></Ico></button>
            <button aria-label="shape"><Ico w={18} h={18}><path d="M3.500 3.500h11v11h-11z" stroke={I} strokeWidth="2" /><path d="M0 0h5v5H0zM13 0h5v5h-5zM0 13h5v5H0zM13 13h5v5h-5z" fill={I} /></Ico></button>
            <button aria-label="smart object"><Ico w={18} h={18}><path d="M6.500 8V1H12l5 4v11h-7" stroke={I} strokeWidth="2" /><path d="M0 9h9v9H0zM11 1v6h6z" fill={I} /></Ico></button>
          </LayerIcons>
          <FilterSwitch aria-label="filter" />
        </LayerBar>
        <LayerBar>
          <Select label="描画モード" w={172} value="通常" />
          <LayerLabel $ml={6} $w={76} htmlFor="不透明度">不透明度 :</LayerLabel>
          <ComboBox id="不透明度" w={79} value="100%" />
        </LayerBar>
        <LayerBar>
          <LayerLabel $ml={3} $w={60}>ロック :</LayerLabel>
          <LayerIcons $ml={0} $gap={11}>
            <button aria-label="transparency"><Ico w={16} h={18}><path d="M0 0h16v18H0z" fill="#8a8889" /><path d="M2 2h4v4H2zM10 2h4v4h-4zM6 7h4v4H6zM2 12h4v4H2zM10 12h4v4h-4z" fill="#555354" /></Ico></button>
            <button aria-label="pixels"><Ico w={22} h={20}><path d="M22 0l-3 1-8 8 3 3z" fill="#9a9899" /><path d="M10 10l4 4c-2 5-8 6-14 4 5-1 4-7 10-8z" fill="#9a9899" /></Ico></button>
            <button aria-label="position"><Ico w={20} h={20}><FourWay x={10} y={10} r={8} fill="#e4e2e3" /></Ico></button>
            <button aria-label="all"><Lock /></button>
          </LayerIcons>
          <LayerLabel $ml={32} $w={46} htmlFor="塗り">塗り :</LayerLabel>
          <ComboBox id="塗り" w={79} value="100%" />
        </LayerBar>
      </PanelBody>
      <LayerArea>
        <LayerList>
          <LayerItem $on>
            <EyeButton aria-label="visibility"><Eye /></EyeButton>
            <Thumb>
              <Ico w={52} h={52}>
                <path d="M1 18V1h17M34 1h17v17M51 35v16H34M18 51H1V35" stroke="#fff" strokeWidth="2" />
                <TypeGlyph x="25" y="36" fontSize="31" textAnchor="middle" fill="#e8e8ee">T</TypeGlyph>
              </Ico>
            </Thumb>
            <LayerName>横書き文字ツール 縦書き文字ツール の使...</LayerName>
          </LayerItem>
          <LayerItem>
            <EyeButton aria-label="visibility"><Eye /></EyeButton>
            <Thumb><WhiteThumb /></Thumb>
            <LayerName $italic>背景</LayerName>
            <LayerLock><Lock hollow /></LayerLock>
          </LayerItem>
        </LayerList>
        <LayerScroll />
      </LayerArea>
      <LayerFooter>
        <button aria-label="link"><Ico w={20} h={18}><path d="M4 2h4M12 2h4" stroke="#777" strokeWidth="2" /></Ico></button>
        <button aria-label="effects"><Ico w={20} h={18}><path d="M16 2c-5-2-6 3-8 14" stroke={I} strokeWidth="2.500" /></Ico></button>
        <button aria-label="mask"><Ico w={20} h={18}><path d="M1 1h18v15H1z" fill={I} /></Ico></button>
        <button aria-label="adjust"><Ico w={20} h={18}><circle cx="10" cy="9" r="9" fill={I} /></Ico></button>
        <button aria-label="group"><Ico w={20} h={18}><path d="M1 1h8l2 2h8v13H1z" fill={I} /></Ico></button>
        <button aria-label="new"><Ico w={20} h={18}><path d="M3 1h15v15H3z" fill={I} /></Ico></button>
        <button aria-label="delete"><Ico w={20} h={18}><path d="M4 5c2-4 10-4 12 0" stroke={I} strokeWidth="3" /></Ico></button>
      </LayerFooter>
    </>
  );
}

export default function App() {
  return (
    <Desktop>
      <Global />
      <TopMenu />
      <Window>
        <TitleBar>
          <Lights>
            <Light aria-label="close" $dot $c="#e0283c" />
            <Light aria-label="minimize" $c="#eda822" />
            <Light aria-label="zoom" $c="#52b848" />
          </Lights>
          <Title>Adobe Photoshop CC</Title>
        </TitleBar>
        <Options />
        <Work>
          <Toolbox />
          <DocumentArea />
          <Dock>
            <CollapseBar $p="0 5px 0 36px">
              <CollapseButton aria-label="expand"><Chev /></CollapseButton>
              <CollapseButton aria-label="collapse"><Chev right /></CollapseButton>
            </CollapseBar>
            <DockBody>
              <Rail />
              <Panels>
                <TabRow tabs={["文字", "段落"]} active="文字" />
                <CharacterPanel />
                <TabRow tabs={["カラー", "スウォッチ", "属性"]} active="属性" closed gap />
                <TabRow tabs={["色調補正", "スタイル", "チャンネル"]} active="チャンネル" closed gap />
                <TabRow tabs={["レイヤー", "パス"]} active="レイヤー" gap />
                <LayersPanel />
              </Panels>
            </DockBody>
          </Dock>
        </Work>
      </Window>
    </Desktop>
  );
}
